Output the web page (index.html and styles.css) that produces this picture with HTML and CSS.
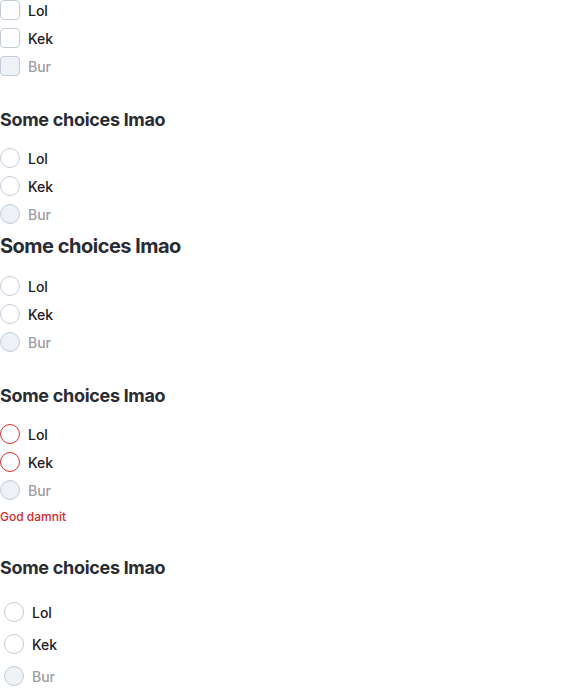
FILE: index.html
```html
<!DOCTYPE html>
<html>
<head>
<meta charset="utf-8">
<link rel="stylesheet" href="styles.css">
</head>
<body>
<div class="page">
  <div class="group g-check">
    <label class="row"><span class="box"></span><span class="txt">Lol</span></label>
    <label class="row"><span class="box"></span><span class="txt">Kek</span></label>
    <label class="row disabled"><span class="box"></span><span class="txt">Bur</span></label>
  </div>

  <fieldset class="set s1">
    <h3 class="legend">Some choices lmao</h3>
    <div class="group">
      <label class="row"><span class="radio"></span><span class="txt">Lol</span></label>
      <label class="row"><span class="radio"></span><span class="txt">Kek</span></label>
      <label class="row disabled"><span class="radio"></span><span class="txt">Bur</span></label>
    </div>
  </fieldset>

  <fieldset class="set s2">
    <h3 class="legend">Some choices lmao</h3>
    <div class="group">
      <label class="row"><span class="radio"></span><span class="txt">Lol</span></label>
      <label class="row"><span class="radio"></span><span class="txt">Kek</span></label>
      <label class="row disabled"><span class="radio"></span><span class="txt">Bur</span></label>
    </div>
  </fieldset>

  <fieldset class="set s3 error">
    <h3 class="legend">Some choices lmao</h3>
    <div class="group">
      <label class="row"><span class="radio"></span><span class="txt">Lol</span></label>
      <label class="row"><span class="radio"></span><span class="txt">Kek</span></label>
      <label class="row disabled"><span class="radio"></span><span class="txt">Bur</span></label>
    </div>
    <div class="err">God damnit</div>
  </fieldset>

  <fieldset class="set s4 large">
    <h3 class="legend">Some choices lmao</h3>
    <div class="group">
      <label class="row"><span class="radio"></span><span class="txt">Lol</span></label>
      <label class="row"><span class="radio"></span><span class="txt">Kek</span></label>
      <label class="row disabled"><span class="radio"></span><span class="txt">Bur</span></label>
    </div>
  </fieldset>
</div>
</body>
</html>
```

FILE: styles.css
```css
* { box-sizing: border-box; }
html, body { margin: 0; padding: 0; background: #fff; }
body {
  font-family: Inter, "Noto Sans", sans-serif;
  color: #1d2026;
  width: 576px;
  height: 692px;
  overflow: hidden;
}
.page { display: flex; flex-direction: column; }
.group { display: flex; flex-direction: column; gap: 8px; }
.row {
  display: flex;
  align-items: center;
  gap: 8px;
  height: 20px;
  font-size: 14px;
  font-weight: 500;
  line-height: 22px;
}
.txt { padding-top: 1px; }
.box, .radio {
  width: 20px;
  height: 20px;
  border: 1px solid #c3ccd8;
  background: #fff;
  flex: none;
}
.box { border-radius: 4px; }
.radio { border-radius: 50%; }
.row.disabled .txt { color: #9b9ea3; }
.row.disabled .box, .row.disabled .radio { background: #eef1f5; }
.set { border: 0; margin: 0; padding: 0; min-width: 0; }
.legend {
  margin: 0;
  font-size: 18px;
  font-weight: 700;
  line-height: 24px;
  letter-spacing: -0.3px;
  color: #2a2c33;
}
.set .legend { margin-bottom: 16px; }
.s1 { margin-top: 32px; }
.s2 { margin-top: 10px; }
.s2 .legend { margin-bottom: 18px; font-size: 20px; letter-spacing: -0.5px; }
.s3 { margin-top: 32px; }
.s4 { margin-top: 31px; }
.s4 .legend { margin-bottom: 22px; }
.error .radio { border-color: #d62f2f; }
.error .row.disabled .radio { border-color: #c3ccd8; }
.err {
  margin-top: 9px;
  font-size: 12px;
  font-weight: 500;
  line-height: 16px;
  color: #d12a2a;
}
.large .group { gap: 12px; padding-left: 4px; }
.large .row { gap: 8px; font-size: 14px; }
```
